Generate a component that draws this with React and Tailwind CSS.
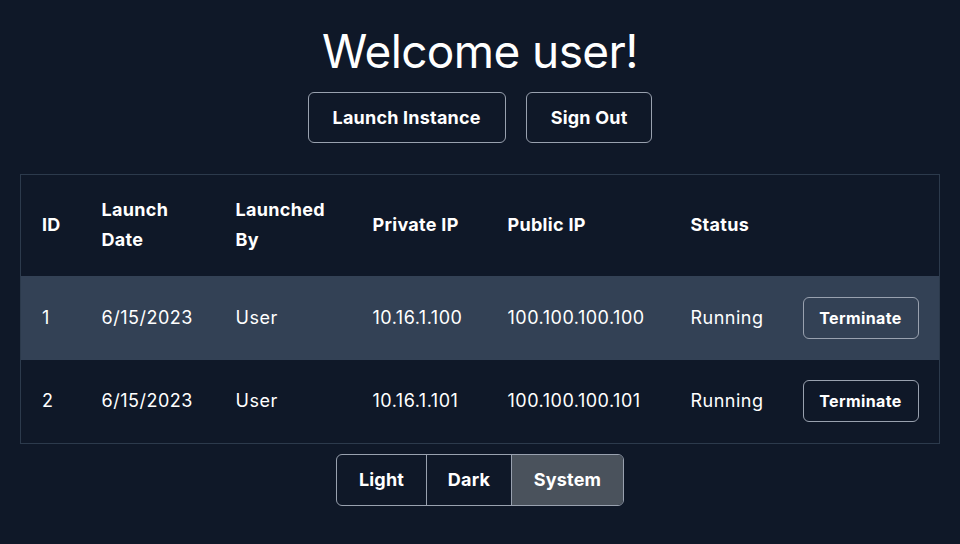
import React, { useState } from 'react';

const instances = [
  { id: 1, date: '6/15/2023', by: 'User', priv: '10.16.1.100', pub: '100.100.100.100', status: 'Running' },
  { id: 2, date: '6/15/2023', by: 'User', priv: '10.16.1.101', pub: '100.100.100.101', status: 'Running' }
];

export default function App() {
  const [theme, setTheme] = useState('system');

  return (
    <div className="min-h-[544px] w-full bg-[#0f1828] text-white flex flex-col items-center font-['Inter',sans-serif]">
      <h1 className="mt-[22px] text-[46px] leading-[58px] font-normal tracking-[-0.6px]">Welcome user!</h1>
      <div className="mt-[12px] flex gap-5">
        <button type="button" className="h-[51px] px-6 rounded-md border border-gray-400 text-lg font-bold tracking-[0.2px]">
          Launch Instance
        </button>
        <button type="button" className="h-[51px] px-6 rounded-md border border-gray-400 text-lg font-bold tracking-[0.2px]">
          Sign Out
        </button>
      </div>
      <table className="mt-[31px] w-[919px] table-fixed border border-[#2c3a4c] border-collapse text-lg">
        <colgroup>
          <col className="w-[60px]" />
          <col className="w-[134px]" />
          <col className="w-[137px]" />
          <col className="w-[135px]" />
          <col className="w-[183px]" />
          <col className="w-[112px]" />
          <col className="w-[158px]" />
        </colgroup>
        <thead>
          <tr className="h-[101px] text-left font-bold leading-[30px] tracking-[0.3px]">
            <th className="pl-[21px] pr-2">ID</th>
            <th className="pl-[21px] pr-2">Launch<br />Date</th>
            <th className="pl-[21px] pr-2">Launched<br />By</th>
            <th className="pl-[21px] pr-2">Private IP</th>
            <th className="pl-[21px] pr-2">Public IP</th>
            <th className="pl-[21px] pr-2">Status</th>
            <th />
          </tr>
        </thead>
        <tbody>
          {instances.map((inst, i) => (
            <tr key={inst.id} className={`h-[84px] tracking-[0.5px] ${i === 0 ? 'bg-[#334155]' : ''}`}>
              <td className="pl-[21px]">{inst.id}</td>
              <td className="pl-[21px]">{inst.date}</td>
              <td className="pl-[21px]">{inst.by}</td>
              <td className="pl-[21px]">{inst.priv}</td>
              <td className="pl-[21px]">{inst.pub}</td>
              <td className="pl-[21px]">{inst.status}</td>
              <td className="pl-[21px]">
                <button type="button" className="w-[116px] h-[42px] rounded-md border border-gray-400 text-base font-bold tracking-[0.4px]">
                  Terminate
                </button>
              </td>
            </tr>
          ))}
        </tbody>
      </table>
      <div className="mt-[10px] flex rounded-md border border-gray-400 overflow-hidden">
        {[
          ['light', 'Light', 'w-[89px]'],
          ['dark', 'Dark', 'w-[85px]'],
          ['system', 'System', 'w-[112px]']
        ].map(([key, label, w], i) => (
          <button
            key={key}
            type="button"
            onClick={() => setTheme(key)}
            className={`${w} h-[50px] text-lg font-bold tracking-[0.2px] ${i > 0 ? 'border-l border-gray-400' : ''} ${
              theme === key ? 'bg-[#4a525c]' : ''
            }`}
          >
            {label}
          </button>
        ))}
      </div>
    </div>
  );
}
